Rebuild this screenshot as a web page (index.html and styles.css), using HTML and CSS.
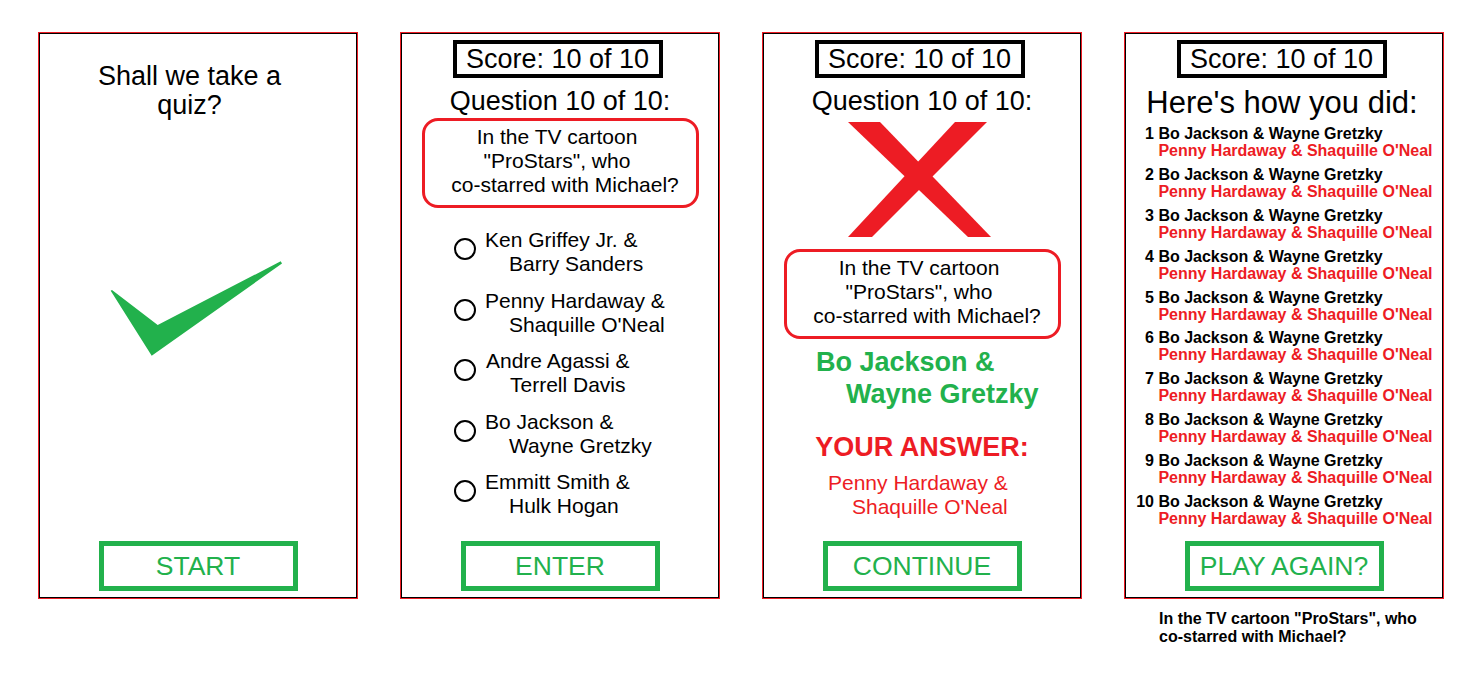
FILE: index.html
```html
<!DOCTYPE html>
<html lang="en">
<head>
<meta charset="utf-8">
<title>Quiz screens</title>
<link rel="stylesheet" href="styles.css">
</head>
<body>
<div class="board">
  <section class="panel">
    <div class="intro">Shall we take a<br>quiz?</div>
    <svg class="check" width="318" height="100" viewBox="0 0 318 100">
      <polygon points="71.7,31.7 73,31 118.7,66 241.7,2.3 243,4.5 112.7,96.7" fill="#22b14c"/>
    </svg>
    <div class="btn">START</div>
  </section>

  <section class="panel">
    <div class="score">Score: 10 of 10</div>
    <div class="qnum">Question 10 of 10:</div>
    <div class="qbox">
      <span class="ql ql-a">In the TV cartoon</span>
      <span class="ql ql-a">"ProStars", who</span>
      <span class="ql ql-c">co-starred with Michael?</span>
    </div>
    <ul class="options">
      <li class="opt"><span class="radio"></span><div class="opt-text">Ken Griffey Jr. &amp;<span class="indent">Barry Sanders</span></div></li>
      <li class="opt"><span class="radio"></span><div class="opt-text">Penny Hardaway &amp;<span class="indent">Shaquille O'Neal</span></div></li>
      <li class="opt"><span class="radio"></span><div class="opt-text opt-shift">Andre Agassi &amp;<span class="indent">Terrell Davis</span></div></li>
      <li class="opt"><span class="radio"></span><div class="opt-text">Bo Jackson &amp;<span class="indent">Wayne Gretzky</span></div></li>
      <li class="opt"><span class="radio"></span><div class="opt-text">Emmitt Smith &amp;<span class="indent">Hulk Hogan</span></div></li>
    </ul>
    <div class="btn">ENTER</div>
  </section>

  <section class="panel">
    <div class="score">Score: 10 of 10</div>
    <div class="qnum">Question 10 of 10:</div>
    <svg class="cross" width="318" height="115" viewBox="0 0 318 115">
      <polygon points="85,0 117,0 228,115 205,115" fill="#ed1c24"/>
      <polygon points="192,0 224,0 109,115 85,115" fill="#ed1c24"/>
    </svg>
    <div class="qbox qbox-result">
      <span class="ql ql-a">In the TV cartoon</span>
      <span class="ql ql-a">"ProStars", who</span>
      <span class="ql ql-c">co-starred with Michael?</span>
    </div>
    <div class="correct">Bo Jackson &amp;<span class="indent-lg">Wayne Gretzky</span></div>
    <div class="your-label">YOUR ANSWER:</div>
    <div class="your-answer">Penny Hardaway &amp;<span class="indent">Shaquille O'Neal</span></div>
    <div class="btn">CONTINUE</div>
  </section>

  <div class="last-col">
    <section class="panel">
      <div class="score">Score: 10 of 10</div>
      <div class="summary-title">Here's how you did:</div>
      <ol class="results">
        <li class="res"><span class="num">1</span><div class="pair"><span class="right">Bo Jackson &amp; Wayne Gretzky</span><span class="wrong">Penny Hardaway &amp; Shaquille O'Neal</span></div></li>
        <li class="res"><span class="num">2</span><div class="pair"><span class="right">Bo Jackson &amp; Wayne Gretzky</span><span class="wrong">Penny Hardaway &amp; Shaquille O'Neal</span></div></li>
        <li class="res"><span class="num">3</span><div class="pair"><span class="right">Bo Jackson &amp; Wayne Gretzky</span><span class="wrong">Penny Hardaway &amp; Shaquille O'Neal</span></div></li>
        <li class="res"><span class="num">4</span><div class="pair"><span class="right">Bo Jackson &amp; Wayne Gretzky</span><span class="wrong">Penny Hardaway &amp; Shaquille O'Neal</span></div></li>
        <li class="res"><span class="num">5</span><div class="pair"><span class="right">Bo Jackson &amp; Wayne Gretzky</span><span class="wrong">Penny Hardaway &amp; Shaquille O'Neal</span></div></li>
        <li class="res"><span class="num">6</span><div class="pair"><span class="right">Bo Jackson &amp; Wayne Gretzky</span><span class="wrong">Penny Hardaway &amp; Shaquille O'Neal</span></div></li>
        <li class="res"><span class="num">7</span><div class="pair"><span class="right">Bo Jackson &amp; Wayne Gretzky</span><span class="wrong">Penny Hardaway &amp; Shaquille O'Neal</span></div></li>
        <li class="res"><span class="num">8</span><div class="pair"><span class="right">Bo Jackson &amp; Wayne Gretzky</span><span class="wrong">Penny Hardaway &amp; Shaquille O'Neal</span></div></li>
        <li class="res"><span class="num">9</span><div class="pair"><span class="right">Bo Jackson &amp; Wayne Gretzky</span><span class="wrong">Penny Hardaway &amp; Shaquille O'Neal</span></div></li>
        <li class="res"><span class="num">10</span><div class="pair"><span class="right">Bo Jackson &amp; Wayne Gretzky</span><span class="wrong">Penny Hardaway &amp; Shaquille O'Neal</span></div></li>
      </ol>
      <div class="btn">PLAY AGAIN?</div>
    </section>
    <p class="caption">In the TV cartoon "ProStars", who<br>co-starred with Michael?</p>
  </div>
</div>
</body>
</html>
```

FILE: styles.css
```css
html, body {
  margin: 0;
  padding: 0;
  background: #ffffff;
}

body {
  font-family: "Liberation Sans", Arial, sans-serif;
  color: #000000;
  padding: 32px 0 0 38px;
}

.board {
  display: flex;
  align-items: flex-start;
  gap: 42px;
}

.panel {
  box-sizing: border-box;
  width: 320px;
  height: 567px;
  border: 1px solid #ed1c24;
  box-shadow: inset 0 0 0 1px #000000;
  display: flex;
  flex-direction: column;
  align-items: center;
}

/* ---------- panel 1 ---------- */
.intro {
  margin-top: 29px;
  padding-right: 17px;
  font-size: 27px;
  line-height: 29px;
  text-align: center;
}

.check {
  display: block;
  align-self: stretch;
  margin-top: 139px;
}

/* ---------- shared ---------- */
.btn {
  box-sizing: border-box;
  width: 199px;
  height: 50px;
  margin-top: auto;
  margin-bottom: 7px;
  border: 5px solid #22b14c;
  color: #22b14c;
  font-size: 26.5px;
  line-height: 38px;
  padding-top: 1px;
  text-align: center;
}

.score {
  box-sizing: border-box;
  width: 210px;
  height: 38px;
  margin-top: 7px;
  margin-right: 5px;
  padding-top: 1px;
  border: 4px solid #000000;
  font-size: 27px;
  line-height: 29px;
  text-align: center;
}

.qnum {
  margin-top: 5px;
  padding-top: 2px;
  font-size: 27px;
  line-height: 32px;
}

.qbox {
  box-sizing: border-box;
  width: 277px;
  height: 90px;
  margin-top: 1px;
  padding-top: 4px;
  border: 3px solid #ed1c24;
  border-radius: 16px;
  font-size: 21px;
  line-height: 24px;
  text-align: center;
}

.ql {
  display: block;
}

.ql-a {
  padding-right: 6px;
}

.ql-c {
  padding-left: 10px;
}

/* ---------- panel 2 ---------- */
.options {
  list-style: none;
  margin: 20px 0 0 0;
  padding: 0 0 0 53px;
  align-self: stretch;
}

.opt {
  display: flex;
  align-items: flex-start;
  gap: 9px;
  margin-bottom: 12.5px;
}

.opt:last-child {
  margin-bottom: 0;
}

.radio {
  box-sizing: border-box;
  flex-shrink: 0;
  width: 22px;
  height: 22px;
  margin-top: 10px;
  border: 2.5px solid #000000;
  border-radius: 50%;
}

.opt-text {
  font-size: 21px;
  line-height: 24px;
  white-space: nowrap;
}

.opt-shift {
  padding-left: 1px;
}

.indent {
  display: block;
  padding-left: 24px;
}

/* ---------- panel 3 ---------- */
.cross {
  display: block;
  align-self: stretch;
  margin-top: 5px;
}

.qbox-result {
  margin-top: 12px;
}

.correct {
  align-self: flex-start;
  margin: 7px 0 0 53px;
  color: #22b14c;
  font-size: 27px;
  font-weight: bold;
  line-height: 32px;
  white-space: nowrap;
}

.indent-lg {
  display: block;
  padding-left: 30px;
}

.your-label {
  margin-top: 21px;
  color: #ed1c24;
  font-size: 27px;
  font-weight: bold;
  line-height: 32px;
}

.your-answer {
  align-self: flex-start;
  margin: 8px 0 0 65px;
  color: #ed1c24;
  font-size: 21px;
  line-height: 24px;
  white-space: nowrap;
}

/* ---------- panel 4 ---------- */
.last-col {
  display: flex;
  flex-direction: column;
}

.summary-title {
  margin-top: 8px;
  margin-right: 4px;
  font-size: 31px;
  line-height: 34px;
}

.results {
  list-style: none;
  margin: 5px 0 0 0;
  padding: 0 0 0 9px;
  align-self: stretch;
}

.res {
  display: flex;
  margin-bottom: 6.9px;
  font-size: 16px;
  font-weight: bold;
  line-height: 17px;
}

.res:last-child {
  margin-bottom: 0;
}

.num {
  width: 20px;
  margin-right: 4.4px;
  text-align: right;
}

.pair {
  display: flex;
  flex-direction: column;
  white-space: nowrap;
}

.right {
  color: #000000;
}

.wrong {
  color: #ed1c24;
}

.caption {
  margin: 11px 0 0 35px;
  font-size: 16px;
  font-weight: bold;
  line-height: 18px;
}
```
